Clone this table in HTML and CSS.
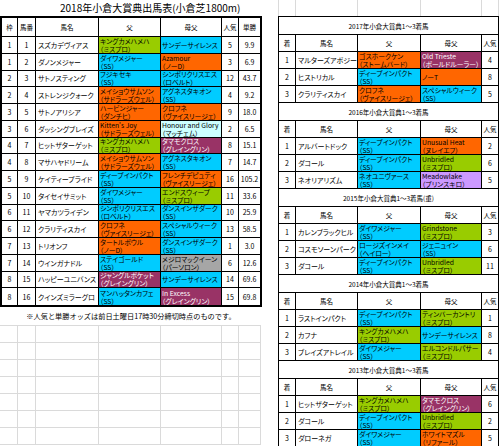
FILE: index.html
```html
<!DOCTYPE html>
<html lang="ja">
<head>
<meta charset="utf-8">
<title>2018年小倉大賞典出馬表</title>
<link rel="stylesheet" href="styles.css">
</head>
<body>
<section class="left">
  <div class="main-title">2018年小倉大賞典出馬表(小倉芝1800m)</div>
  <div class="entry">
    <div class="h">枠</div><div class="h">馬番</div><div class="h">馬名</div><div class="h">父</div><div class="h">母父</div><div class="h">人気</div><div class="h">単勝</div>

    <div class="n">1</div><div class="n">1</div><div class="nm">スズカデヴィアス</div><div class="p mp"><span>キングカメハメハ</span><span>（ミスプロ）</span></div><div class="p ss"><span>サンデーサイレンス</span></div><div class="n">5</div><div class="n">9.9</div>

    <div class="n">1</div><div class="n">2</div><div class="nm">ダノンメジャー</div><div class="p ss"><span>ダイワメジャー</span><span>（SS）</span></div><div class="p or"><span>Azamour</span><span>（ノーD）</span></div><div class="n">3</div><div class="n">6.9</div>

    <div class="n">2</div><div class="n">3</div><div class="nm">サトノスティング</div><div class="p ss"><span>フジキセキ</span><span>（SS）</span></div><div class="p ss"><span>シンボリクリスエス</span><span>（ロベルト）</span></div><div class="n">12</div><div class="n">43.7</div>

    <div class="n">2</div><div class="n">4</div><div class="nm">ストレンジクォーク</div><div class="p or"><span>メイショウサムソン</span><span>（サドラーズウェル）</span></div><div class="p ss"><span>アグネスタキオン</span><span>（SS）</span></div><div class="n">4</div><div class="n">9.2</div>

    <div class="n">3</div><div class="n">5</div><div class="nm">サトノアリシア</div><div class="p or"><span>ハービンジャー</span><span>（ダンチヒ）</span></div><div class="p or"><span>クロフネ</span><span>（ヴァイスリージェ）</span></div><div class="n">9</div><div class="n">18.0</div>

    <div class="n">3</div><div class="n">6</div><div class="nm">ダッシングブレイズ</div><div class="p or"><span>Kitten's Joy</span><span>（サドラーズウェル）</span></div><div class="p lt"><span>Honour and Glory</span><span>（マッチェム）</span></div><div class="n">2</div><div class="n">6.5</div>

    <div class="n">4</div><div class="n">7</div><div class="nm">ヒットザターゲット</div><div class="p mp"><span>キングカメハメハ</span><span>（ミスプロ）</span></div><div class="p pl"><span>タマモクロス</span><span>（グレイングリン）</span></div><div class="n">8</div><div class="n">15.1</div>

    <div class="n">4</div><div class="n">8</div><div class="nm">マサハヤドリーム</div><div class="p or"><span>メイショウサムソン</span><span>（サドラーズウェル）</span></div><div class="p ss"><span>アグネスタキオン</span><span>（SS）</span></div><div class="n">7</div><div class="n">14.7</div>

    <div class="n">5</div><div class="n">9</div><div class="nm">ケイティープライド</div><div class="p ss"><span>ディープインパクト</span><span>（SS）</span></div><div class="p or"><span>フレンチデピュティ</span><span>（ヴァイスリージェ）</span></div><div class="n">16</div><div class="n">105.2</div>

    <div class="n">5</div><div class="n">10</div><div class="nm">タイセイサミット</div><div class="p ss"><span>ダイワメジャー</span><span>（SS）</span></div><div class="p mp"><span>エンドスウィープ</span><span>（ミスプロ）</span></div><div class="n">11</div><div class="n">33.6</div>

    <div class="n">6</div><div class="n">11</div><div class="nm">ヤマカツライデン</div><div class="p ss"><span>シンボリクリスエス</span><span>（ロベルト）</span></div><div class="p ss"><span>ダンスインザダーク</span><span>（SS）</span></div><div class="n">10</div><div class="n">25.9</div>

    <div class="n">6</div><div class="n">12</div><div class="nm">クラリティスカイ</div><div class="p or"><span>クロフネ</span><span>（ヴァイスリージェ）</span></div><div class="p ss"><span>スペシャルウィーク</span><span>（SS）</span></div><div class="n">13</div><div class="n">58.5</div>

    <div class="n">7</div><div class="n">13</div><div class="nm">トリオンフ</div><div class="p or"><span>タートルボウル</span><span>（ノーD）</span></div><div class="p ss"><span>ダンスインザダーク</span><span>（SS）</span></div><div class="n">1</div><div class="n">3.0</div>

    <div class="n">7</div><div class="n">14</div><div class="nm">ウインガナドル</div><div class="p ss"><span>ステイゴールド</span><span>（SS）</span></div><div class="p gy"><span>メジロマックイーン</span><span>（パーソロン）</span></div><div class="n">6</div><div class="n">12.6</div>

    <div class="n">8</div><div class="n">15</div><div class="nm">ハッピーユニバンス</div><div class="p pl"><span>ジャングルポケット</span><span>（グレイングリン）</span></div><div class="p ss"><span>サンデーサイレンス</span></div><div class="n">14</div><div class="n">69.6</div>

    <div class="n">8</div><div class="n">16</div><div class="nm">クインズミラーグロ</div><div class="p ss"><span>マンハッタンカフェ</span><span>（SS）</span></div><div class="p pl"><span>In Excess</span><span>（グレイングリン）</span></div><div class="n">15</div><div class="n">69.8</div>
  </div>
  <div class="note">※人気と単勝オッズは前日土曜日17時30分締切時点のものです。</div>
  <div class="blank">
    <div></div><div></div><div></div><div></div><div></div><div></div><div></div>
    <div></div><div></div><div></div><div></div><div></div><div></div><div></div>
    <div></div><div></div><div></div><div></div><div></div><div></div><div></div>
    <div></div><div></div><div></div><div></div><div></div><div></div><div></div>
    <div></div><div></div><div></div><div></div><div></div><div></div><div></div>
    <div></div><div></div><div></div><div></div><div></div><div></div><div></div>
    <div></div><div></div><div></div><div></div><div></div><div></div><div></div>
  </div>
</section>

<section class="right">
  <div class="topblank"><div></div><div></div><div></div><div></div><div></div></div>
  <div class="results">
    <div class="rt">2017年小倉大賞典1～3着馬</div>
    <div class="h">着</div><div class="h">馬名</div><div class="h">父</div><div class="h">母父</div><div class="h">人気</div>
    <div class="n">1</div><div class="nm">マルターズアポジー</div><div class="p or"><span>ゴスホークケン</span><span>（ストームバード）</span></div><div class="p pl"><span>Old Trieste</span><span>（ボールドルーラー）</span></div><div class="n">4</div>
    <div class="n">2</div><div class="nm">ヒストリカル</div><div class="p ss"><span>ディープインパクト</span><span>（SS）</span></div><div class="p or"><span>ノーT</span></div><div class="n">8</div>
    <div class="n">3</div><div class="nm">クラリティスカイ</div><div class="p or"><span>クロフネ</span><span>（ヴァイスリージェ）</span></div><div class="p ss"><span>スペシャルウィーク</span><span>（SS）</span></div><div class="n">5</div>

    <div class="rt">2016年小倉大賞典1～3着馬</div>
    <div class="h">着</div><div class="h">馬名</div><div class="h">父</div><div class="h">母父</div><div class="h">人気</div>
    <div class="n">1</div><div class="nm">アルバートドック</div><div class="p ss"><span>ディープインパクト</span><span>（SS）</span></div><div class="p or"><span>Unusual Heat</span><span>（ヌレイエフ）</span></div><div class="n">2</div>
    <div class="n">2</div><div class="nm">ダコール</div><div class="p ss"><span>ディープインパクト</span><span>（SS）</span></div><div class="p mp"><span>Unbridled</span><span>（ミスプロ）</span></div><div class="n">6</div>
    <div class="n">3</div><div class="nm">ネオリアリズム</div><div class="p ss"><span>ネオユニヴァース</span><span>（SS）</span></div><div class="p lv"><span>Meadowlake</span><span>（プリンスキロ）</span></div><div class="n">5</div>

    <div class="rt">2015年小倉大賞典1～3着馬(重)</div>
    <div class="h">着</div><div class="h">馬名</div><div class="h">父</div><div class="h">母父</div><div class="h">人気</div>
    <div class="n">1</div><div class="nm">カレンブラックヒル</div><div class="p ss"><span>ダイワメジャー</span><span>（SS）</span></div><div class="p mp"><span>Grindstone</span><span>（ミスプロ）</span></div><div class="n">3</div>
    <div class="n">2</div><div class="nm">コスモソーンパーク</div><div class="p ss"><span>ロージズインメイ</span><span>（ヘイロー）</span></div><div class="p ss"><span>ジェニュイン</span><span>（SS）</span></div><div class="n">6</div>
    <div class="n">3</div><div class="nm">ダコール</div><div class="p ss"><span>ディープインパクト</span><span>（SS）</span></div><div class="p mp"><span>Unbridled</span><span>（ミスプロ）</span></div><div class="n">11</div>

    <div class="rt">2014年小倉大賞典1～3着馬</div>
    <div class="h">着</div><div class="h">馬名</div><div class="h">父</div><div class="h">母父</div><div class="h">人気</div>
    <div class="n">1</div><div class="nm">ラストインパクト</div><div class="p ss"><span>ディープインパクト</span><span>（SS）</span></div><div class="p mp"><span>ティンバーカントリ</span><span>（ミスプロ）</span></div><div class="n">1</div>
    <div class="n">2</div><div class="nm">カフナ</div><div class="p mp"><span>キングカメハメハ</span><span>（ミスプロ）</span></div><div class="p ss"><span>サンデーサイレンス</span></div><div class="n">8</div>
    <div class="n">3</div><div class="nm">ブレイズアトレイル</div><div class="p ss"><span>ダイワメジャー</span><span>（SS）</span></div><div class="p mp"><span>エルコンドルパサー</span><span>（ミスプロ）</span></div><div class="n">4</div>

    <div class="rt">2013年小倉大賞典1～3着馬</div>
    <div class="h">着</div><div class="h">馬名</div><div class="h">父</div><div class="h">母父</div><div class="h">人気</div>
    <div class="n">1</div><div class="nm">ヒットザターゲット</div><div class="p mp"><span>キングカメハメハ</span><span>（ミスプロ）</span></div><div class="p pl"><span>タマモクロス</span><span>（グレイングリン）</span></div><div class="n">6</div>
    <div class="n">2</div><div class="nm">ダコール</div><div class="p ss"><span>ディープインパクト</span><span>（SS）</span></div><div class="p mp"><span>Unbridled</span><span>（ミスプロ）</span></div><div class="n">2</div>
    <div class="n">3</div><div class="nm">ダローネガ</div><div class="p ss"><span>ダイワメジャー</span><span>（SS）</span></div><div class="p or"><span>ホワイトマズル</span><span>（リファール）</span></div><div class="n">5</div>
  </div>
</section>
</body>
</html>
```

FILE: styles.css
```css
* { box-sizing: border-box; margin: 0; padding: 0; }

html, body {
  width: 499px;
  height: 446px;
  overflow: hidden;
  background: #fff;
}

body {
  display: flex;
  gap: 16px;
  font-family: "Noto Sans CJK JP", "Noto Sans", "Liberation Sans", sans-serif;
  font-size: 7px;
  line-height: 8px;
  color: #000;
  font-feature-settings: "palt";
}

/* ---------- left: entry table ---------- */
.left {
  width: 262px;
  flex: none;
  display: flex;
  flex-direction: column;
}

.main-title {
  height: 16px;
  padding-left: 60px;
  font-size: 10px;
  line-height: 16px;
  white-space: nowrap;
  font-feature-settings: normal;
}

.entry {
  display: grid;
  grid-template-columns: 16px 18px 63px 62px 61px 17px 21px;
  grid-template-rows: 19px repeat(16, 16.75px);
  border: 2px solid #000;
}

.entry > div,
.results > div {
  border-right: 1px solid #000;
  border-bottom: 1px solid #000;
  overflow: hidden;
  white-space: nowrap;
}

.entry > div:nth-child(7n) { border-right: 0; }
.entry > div:nth-last-child(-n+7) { border-bottom: 0; }

.h, .n {
  display: flex;
  align-items: center;
  justify-content: center;
}

.h { font-size: 6.5px; }

.nm {
  display: flex;
  align-items: center;
  padding-left: 2px;
}

.p {
  display: flex;
  flex-direction: column;
  justify-content: center;
  padding-left: 1px;
  font-size: 6.8px;
}

.p span {
  display: block;
  height: 8px;
}

.ss { background: #00ccff; }
.mp { background: #99cc00; }
.or { background: #ff6600; }
.pl { background: #993366; color: #fff; }
.lt { background: #ccffff; }
.gy { background: #a6a6a6; }
.lv { background: #cc99ff; }

.note {
  height: 18px;
  line-height: 18px;
  text-align: center;
  font-size: 7.2px;
  white-space: nowrap;
  font-feature-settings: normal;
}

.blank {
  display: grid;
  grid-template-columns: 18px 18px 63px 62px 61px 17px 22px;
  grid-auto-rows: 17px;
  border-top: 1px solid #dadada;
  width: 261px;
}

.blank > div {
  border-right: 1px solid #dadada;
  border-bottom: 1px solid #dadada;
}

/* ---------- right: past results ---------- */
.right {
  width: 221px;
  flex: none;
  display: flex;
  flex-direction: column;
}

.topblank {
  height: 16px;
  flex: none;
  display: grid;
  grid-template-columns: 17px 62px 63px 61px 17px;
  border-left: 1px solid #dadada;
}

.topblank > div { border-right: 1px solid #dadada; }

.results {
  display: grid;
  grid-template-columns: 17px 62px 63px 61px 17px;
  grid-template-rows: repeat(5, 18px 17px 17px 17px 17px);
  border-left: 1px solid #000;
  border-top: 1px solid #000;
}

.rt {
  grid-column: 1 / -1;
  display: flex;
  align-items: center;
  justify-content: center;
  font-size: 6.5px;
  font-feature-settings: normal;
}
```
